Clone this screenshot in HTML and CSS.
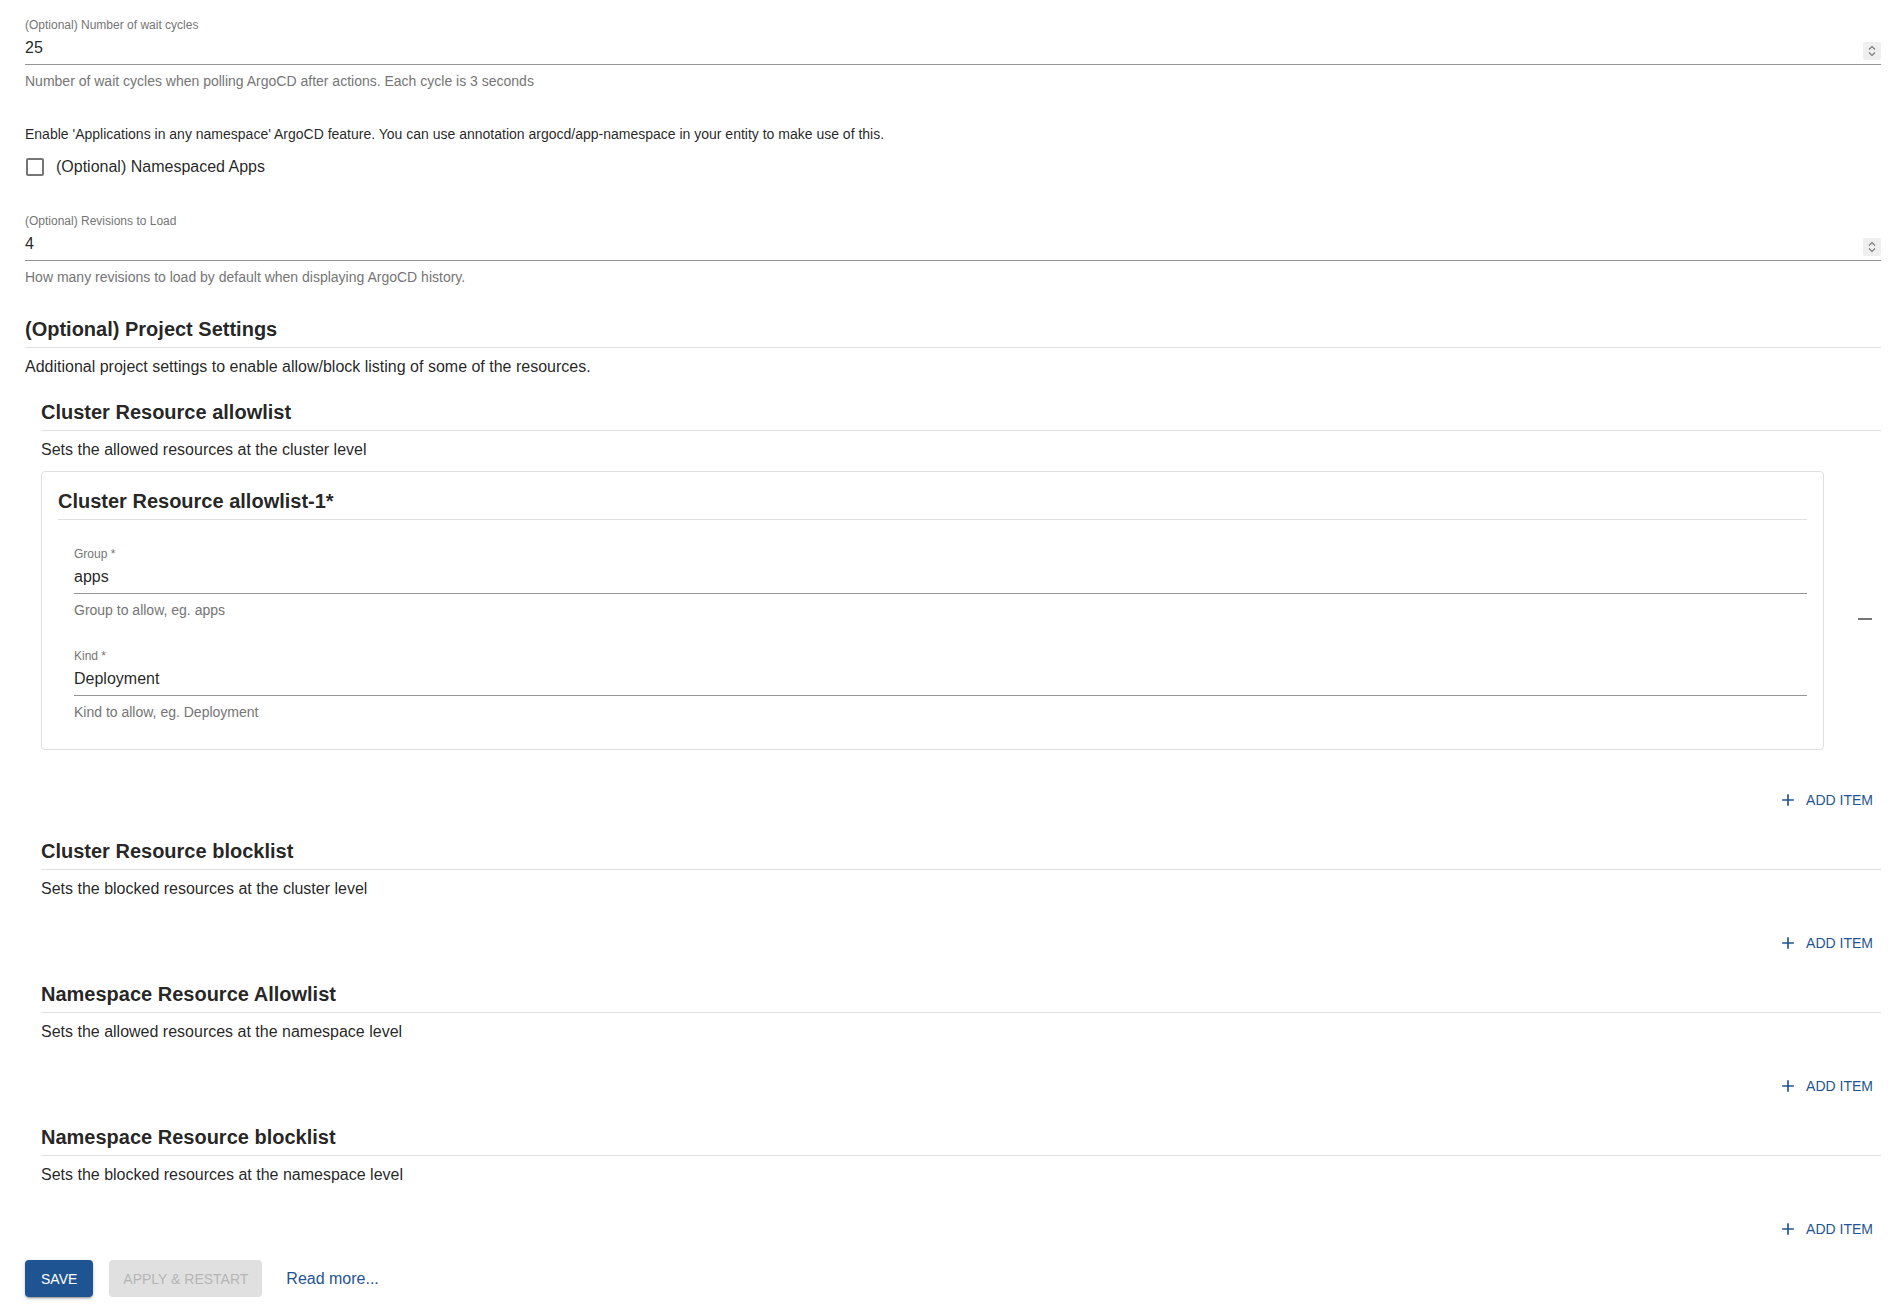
FILE: index.html
```html
<!DOCTYPE html>
<html lang="en">
<head>
<meta charset="utf-8">
<title>ArgoCD settings</title>
<link rel="stylesheet" href="styles.css">
</head>
<body>
<form class="page">
  <div class="field field-first">
    <div class="field-label">(Optional) Number of wait cycles</div>
    <div class="field-input">
      <span class="field-value">25</span>
      <span class="spinner">
        <svg width="18" height="18" viewBox="0 0 18 18"><path d="M6 7.5 L9 4.5 L12 7.5" fill="none" stroke="#7a7a7a" stroke-width="1.2"/><path d="M6 10.5 L9 13.5 L12 10.5" fill="none" stroke="#7a7a7a" stroke-width="1.2"/></svg>
      </span>
    </div>
    <div class="field-help">Number of wait cycles when polling ArgoCD after actions. Each cycle is 3 seconds</div>
  </div>

  <div class="check-desc">Enable 'Applications in any namespace' ArgoCD feature. You can use annotation argocd/app-namespace in your entity to make use of this.</div>
  <label class="check-row">
    <span class="check-box-wrap"><span class="check-box"></span></span>
    <span class="check-label">(Optional) Namespaced Apps</span>
  </label>

  <div class="field field-second">
    <div class="field-label">(Optional) Revisions to Load</div>
    <div class="field-input">
      <span class="field-value">4</span>
      <span class="spinner">
        <svg width="18" height="18" viewBox="0 0 18 18"><path d="M6 7.5 L9 4.5 L12 7.5" fill="none" stroke="#7a7a7a" stroke-width="1.2"/><path d="M6 10.5 L9 13.5 L12 10.5" fill="none" stroke="#7a7a7a" stroke-width="1.2"/></svg>
      </span>
    </div>
    <div class="field-help">How many revisions to load by default when displaying ArgoCD history.</div>
  </div>

  <section class="group">
    <h5 class="group-title">(Optional) Project Settings</h5>
    <div class="group-desc">Additional project settings to enable allow/block listing of some of the resources.</div>

    <div class="array">
      <h5 class="group-title">Cluster Resource allowlist</h5>
      <div class="group-desc">Sets the allowed resources at the cluster level</div>
      <div class="items">
        <div class="item">
          <div class="card">
            <h5 class="card-title">Cluster Resource allowlist-1*</h5>
            <div class="card-fields">
              <div class="field">
                <div class="field-label">Group *</div>
                <div class="field-input"><span class="field-value">apps</span></div>
                <div class="field-help">Group to allow, eg. apps</div>
              </div>
              <div class="field field-next">
                <div class="field-label">Kind *</div>
                <div class="field-input"><span class="field-value">Deployment</span></div>
                <div class="field-help">Kind to allow, eg. Deployment</div>
              </div>
            </div>
          </div>
          <div class="item-tools">
            <svg class="remove-icon" width="24" height="24" viewBox="0 0 24 24"><path d="M19 13H5v-2h14v2z" fill="#757575"/></svg>
          </div>
        </div>
      </div>
      <div class="add-row">
        <span class="add-btn"><svg width="20" height="20" viewBox="0 0 24 24"><path d="M19 13h-6v6h-2v-6H5v-2h6V5h2v6h6v2z" fill="#1F5493"/></svg>ADD ITEM</span>
      </div>
    </div>

    <div class="array">
      <h5 class="group-title">Cluster Resource blocklist</h5>
      <div class="group-desc">Sets the blocked resources at the cluster level</div>
      <div class="add-row">
        <span class="add-btn"><svg width="20" height="20" viewBox="0 0 24 24"><path d="M19 13h-6v6h-2v-6H5v-2h6V5h2v6h6v2z" fill="#1F5493"/></svg>ADD ITEM</span>
      </div>
    </div>

    <div class="array">
      <h5 class="group-title">Namespace Resource Allowlist</h5>
      <div class="group-desc">Sets the allowed resources at the namespace level</div>
      <div class="add-row">
        <span class="add-btn"><svg width="20" height="20" viewBox="0 0 24 24"><path d="M19 13h-6v6h-2v-6H5v-2h6V5h2v6h6v2z" fill="#1F5493"/></svg>ADD ITEM</span>
      </div>
    </div>

    <div class="array">
      <h5 class="group-title">Namespace Resource blocklist</h5>
      <div class="group-desc">Sets the blocked resources at the namespace level</div>
      <div class="add-row">
        <span class="add-btn"><svg width="20" height="20" viewBox="0 0 24 24"><path d="M19 13h-6v6h-2v-6H5v-2h6V5h2v6h6v2z" fill="#1F5493"/></svg>ADD ITEM</span>
      </div>
    </div>
  </section>

  <div class="actions">
    <span class="btn btn-primary">SAVE</span>
    <span class="btn btn-disabled">APPLY &amp; RESTART</span>
    <span class="link">Read more...</span>
  </div>
</form>
</body>
</html>
```

FILE: styles.css
```css
html, body {
  margin: 0;
  padding: 0;
  background: #ffffff;
}

body {
  font-family: "Liberation Sans", Arial, Helvetica, sans-serif;
  color: rgba(0, 0, 0, 0.87);
}

.page {
  width: 1856px;
  padding-left: 25px;
  padding-top: 16px;
  padding-bottom: 10px;
}

/* text fields */
.field-label {
  font-size: 12px;
  line-height: 16px;
  height: 16px;
  padding-top: 1px;
  color: #757575;
}

.field-input {
  display: flex;
  align-items: center;
  height: 31px;
  border-bottom: 1px solid #949494;
}

.field-value {
  flex: 1;
  font-size: 16px;
  line-height: 30px;
  height: 30px;
  margin-top: -1px;
  color: rgba(0, 0, 0, 0.87);
}

.spinner {
  width: 18px;
  height: 18px;
  background: #efefef;
  border-radius: 2px;
  display: flex;
  margin-top: 4px;
}

.field-help {
  margin-top: 6px;
  font-size: 14px;
  line-height: 20px;
  color: #757575;
}

/* checkbox */
.check-desc {
  margin-top: 33px;
  font-size: 14px;
  line-height: 20px;
  color: rgba(0, 0, 0, 0.87);
}

.check-row {
  display: flex;
  align-items: center;
  height: 42px;
  margin-top: 2px;
  margin-left: -11px;
}

.check-box-wrap {
  width: 42px;
  height: 42px;
  display: flex;
  align-items: center;
  justify-content: center;
}

.check-box {
  width: 14px;
  height: 14px;
  border: 2px solid #757575;
  border-radius: 2px;
}

.check-label {
  font-size: 16px;
  line-height: 24px;
  color: rgba(0, 0, 0, 0.87);
}

.field-second {
  margin-top: 24px;
}

/* groups */
.group {
  margin-top: 28px;
}

.group-title {
  margin: 0;
  font-size: 20px;
  font-weight: 700;
  line-height: 28px;
  padding-bottom: 4px;
  border-bottom: 1px solid #e0e0e0;
  color: rgba(0, 0, 0, 0.87);
}

.group-desc {
  margin-top: 7px;
  font-size: 16px;
  line-height: 24px;
  color: rgba(0, 0, 0, 0.87);
}

.array {
  margin-left: 16px;
  margin-top: 19px;
}

.items {
  margin-top: 9px;
  padding-bottom: 8px;
}

.item {
  display: flex;
  align-items: center;
}

.card {
  flex: 1;
  border: 1px solid #e0e0e0;
  border-radius: 4px;
  padding: 15px 16px 27px 16px;
}

.card-title {
  margin: 0;
  font-size: 20px;
  font-weight: 700;
  line-height: 28px;
  padding-bottom: 4px;
  border-bottom: 1px solid #e0e0e0;
}

.card-fields {
  padding-left: 16px;
  padding-top: 25px;
}

.field-next {
  margin-top: 27px;
}

.item-tools {
  width: 57px;
  display: flex;
  justify-content: flex-end;
  padding-top: 16px;
}

.remove-icon {
  margin-right: 4px;
}

.add-row {
  display: flex;
  justify-content: flex-end;
  margin-top: 24px;
}

.add-btn {
  display: flex;
  align-items: center;
  height: 36px;
  padding: 0 8px 0 4px;
  font-size: 14px;
  color: #1F5493;
}

.add-btn svg {
  margin-right: 8px;
}

/* actions */
.actions {
  display: flex;
  align-items: center;
  margin-top: 13px;
}

.btn {
  display: inline-flex;
  align-items: center;
  justify-content: center;
  height: 37px;
  padding: 0 16px;
  font-size: 14px;
  border-radius: 4px;
}

.btn-primary {
  background: #1F5493;
  color: #ffffff;
  box-shadow: 0 3px 1px -2px rgba(0,0,0,0.2), 0 2px 2px 0 rgba(0,0,0,0.14), 0 1px 5px 0 rgba(0,0,0,0.12);
}

.btn-disabled {
  margin-left: 16px;
  background: #e0e0e0;
  color: #b5b5b5;
  padding: 0 14px;
}

.link {
  margin-left: 24px;
  font-size: 16px;
  color: #1F5493;
}
```
